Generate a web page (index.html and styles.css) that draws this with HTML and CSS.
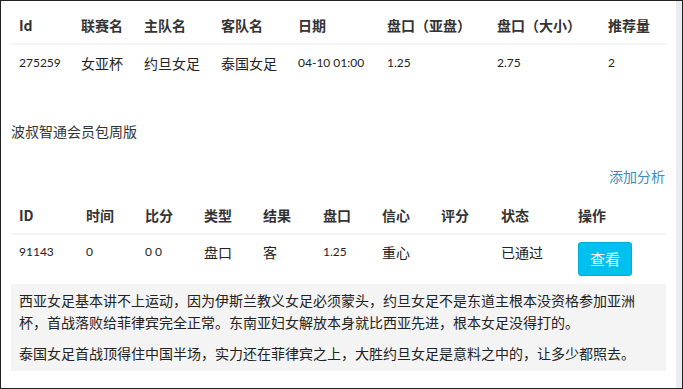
FILE: index.html
```html
<!DOCTYPE html>
<html lang="zh">
<head>
<meta charset="utf-8">
<link rel="stylesheet" href="styles.css">
</head>
<body>
<div class="frame">
  <div class="page">
    <table class="tbl t1">
      <thead>
        <tr>
          <th class="c62">Id</th>
          <th class="c63">联赛名</th>
          <th class="c77">主队名</th>
          <th class="c77">客队名</th>
          <th class="c89">日期</th>
          <th class="c110">盘口（亚盘）</th>
          <th class="c111">盘口（大小）</th>
          <th>推荐量</th>
        </tr>
      </thead>
      <tbody>
        <tr>
          <td class="num">275259</td>
          <td>女亚杯</td>
          <td>约旦女足</td>
          <td>泰国女足</td>
          <td class="num">04-10 01:00</td>
          <td class="num">1.25</td>
          <td class="num">2.75</td>
          <td class="num">2</td>
        </tr>
      </tbody>
    </table>

    <p class="title">波叔智通会员包周版</p>
    <div class="actions"><a class="link" href="#">添加分析</a></div>

    <table class="tbl t2">
      <thead>
        <tr>
          <th class="c67">ID</th>
          <th class="c59">时间</th>
          <th class="c59">比分</th>
          <th class="c59">类型</th>
          <th class="c60">结果</th>
          <th class="c59">盘口</th>
          <th class="c59">信心</th>
          <th class="c60">评分</th>
          <th class="c77">状态</th>
          <th>操作</th>
        </tr>
      </thead>
      <tbody>
        <tr>
          <td class="num">91143</td>
          <td class="num">0</td>
          <td class="num">0 0</td>
          <td>盘口</td>
          <td>客</td>
          <td class="num">1.25</td>
          <td>重心</td>
          <td></td>
          <td>已通过</td>
          <td><button class="btn">查看</button></td>
        </tr>
      </tbody>
    </table>

    <div class="analysis">
      <p>西亚女足基本讲不上运动，因为伊斯兰教义女足必须蒙头，约旦女足不是东道主根本没资格参加亚洲杯，首战落败给菲律宾完全正常。东南亚妇女解放本身就比西亚先进，根本女足没得打的。</p>
      <p>泰国女足首战顶得住中国半场，实力还在菲律宾之上，大胜约旦女足是意料之中的，让多少都照去。</p>
    </div>
  </div>
  <div class="scrollbar"></div>
</div>
</body>
</html>
```

FILE: styles.css
```css
* { box-sizing: border-box; }
html, body { margin: 0; padding: 0; background: #fff; }
body {
  font-family: "Noto Sans CJK SC", "Noto Sans", sans-serif;
  font-size: 14px;
  color: #333;
}
.frame {
  width: 683px;
  height: 389px;
  border: 1px solid #222;
  display: flex;
  overflow: hidden;
}
.page {
  flex: 1;
  padding: 6px 10px 0 10px;
}
.scrollbar {
  width: 6px;
  background: #e9ecf1;
}
.tbl {
  width: 100%;
  border-collapse: collapse;
  table-layout: fixed;
}
.tbl th, .tbl td {
  padding: 8px;
  line-height: 20px;
  text-align: left;
  white-space: nowrap;
}
.tbl th {
  font-weight: bold;
  vertical-align: bottom;
  border-bottom: 2px solid #f4f4f4;
  color: #333;
}
.tbl td {
  vertical-align: top;
  color: #222;
}
.t2 td { padding-top: 7px; }
.num {
  font-family: "Lato", sans-serif;
  font-size: 12px;
  color: #333;
}
.c59 { width: 59px; }
.c60 { width: 60px; }
.c62 { width: 62px; }
.c63 { width: 63px; }
.c67 { width: 67px; }
.c77 { width: 77px; }
.c89 { width: 89px; }
.c110 { width: 110px; }
.c111 { width: 111px; }
.title {
  margin: 40px 0 0 0;
  line-height: 20px;
  color: #333;
}
.actions {
  margin-top: 25px;
  text-align: right;
  padding-right: 1px;
  line-height: 20px;
}
.link {
  color: #3c8dbc;
  text-decoration: none;
}
.t2 { margin-top: 11px; }
.btn {
  background: #00c0ef;
  border: 1px solid #00acd6;
  color: #fff;
  border-radius: 3px;
  padding: 6px 0;
  font-family: "Noto Sans CJK SC", sans-serif;
  font-size: 15px;
  line-height: 20px;
  height: 34px;
  width: 54px;
}
.analysis {
  background: #f4f4f4;
  padding: 5px 20px 7px 8px;
  color: #222;
}
.analysis p {
  margin: 0 0 9px 0;
  line-height: 22px;
}
.analysis p:last-child { margin-bottom: 0; }
```
